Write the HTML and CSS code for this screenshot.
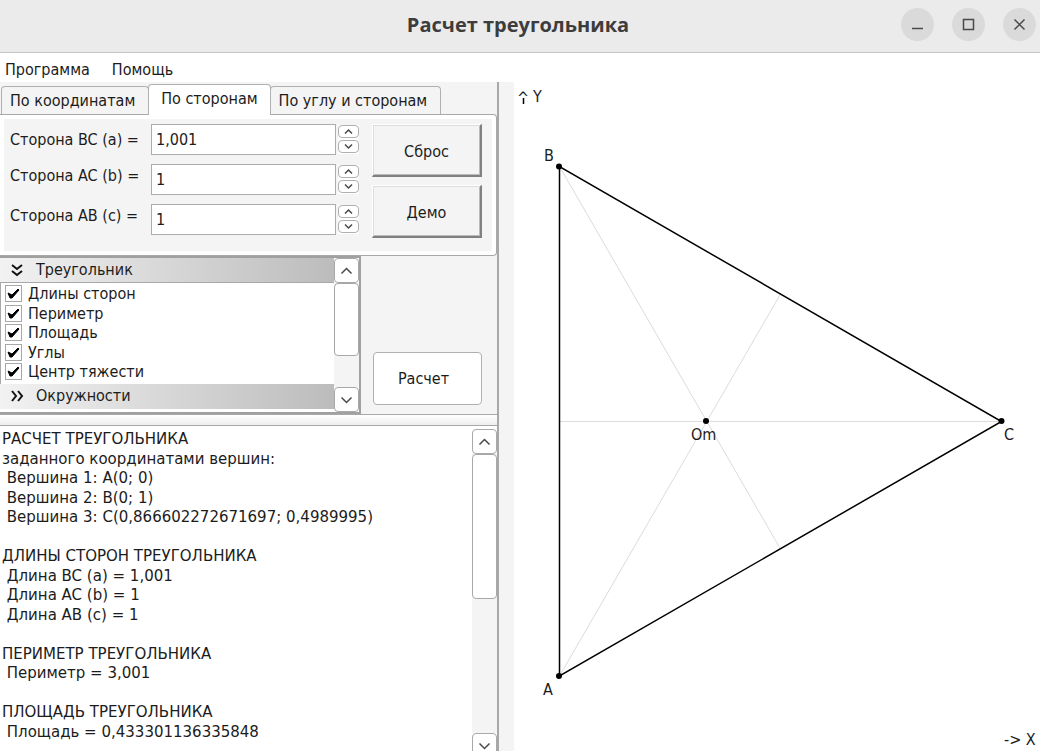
FILE: index.html
```html
<!DOCTYPE html>
<html lang="ru">
<head>
<meta charset="utf-8">
<title>Расчет треугольника</title>
<link rel="stylesheet" href="styles.css">
</head>
<body>
<div class="window">
  <header class="titlebar">
    <h1 class="title">Расчет треугольника</h1>
    <div class="controls">
      <button class="control" type="button" aria-label="Свернуть"><svg width="33" height="33" viewBox="0 0 33 33"><path d="M11 20.5h11"/></svg></button>
      <button class="control" type="button" aria-label="Развернуть"><svg width="33" height="33" viewBox="0 0 33 33"><path d="M11.5 11.5h10v10h-10z"/></svg></button>
      <button class="control" type="button" aria-label="Закрыть"><svg width="33" height="33" viewBox="0 0 33 33"><path d="M11.5 11.5l10 10M21.5 11.5l-10 10"/></svg></button>
    </div>
  </header>
  <nav class="menubar">
    <button class="menu" type="button">Программа</button>
    <button class="menu" type="button">Помощь</button>
  </nav>
  <main class="body">
    <div class="left">
      <div class="tabs" role="tablist">
        <button class="tab" type="button" role="tab" aria-selected="false">По координатам</button>
        <button class="tab active" type="button" role="tab" aria-selected="true">По сторонам</button>
        <button class="tab" type="button" role="tab" aria-selected="false">По углу и сторонам</button>
      </div>
      <div class="panel" role="tabpanel">
        <div class="panel-inner">
          <div class="sides">
            <div class="side">
              <label class="side-label" for="bc">Сторона BC (a) =</label>
              <input class="field" id="bc" type="text" value="1,001">
              <div class="spin">
                <button class="step" type="button" aria-label="Увеличить BC"><svg width="11" height="7" viewBox="0 0 11 7"><path d="M2 5.500l3.500-3.500 3.500 3.500"/></svg></button>
                <button class="step" type="button" aria-label="Уменьшить BC"><svg width="11" height="7" viewBox="0 0 11 7"><path d="M2 1.500l3.500 3.500 3.500-3.500"/></svg></button>
              </div>
            </div>
            <div class="side">
              <label class="side-label" for="ac">Сторона AC (b) =</label>
              <input class="field" id="ac" type="text" value="1">
              <div class="spin">
                <button class="step" type="button" aria-label="Увеличить AC"><svg width="11" height="7" viewBox="0 0 11 7"><path d="M2 5.500l3.500-3.500 3.500 3.500"/></svg></button>
                <button class="step" type="button" aria-label="Уменьшить AC"><svg width="11" height="7" viewBox="0 0 11 7"><path d="M2 1.500l3.500 3.500 3.500-3.500"/></svg></button>
              </div>
            </div>
            <div class="side">
              <label class="side-label" for="ab">Сторона AB (c) =</label>
              <input class="field" id="ab" type="text" value="1">
              <div class="spin">
                <button class="step" type="button" aria-label="Увеличить AB"><svg width="11" height="7" viewBox="0 0 11 7"><path d="M2 5.500l3.500-3.500 3.500 3.500"/></svg></button>
                <button class="step" type="button" aria-label="Уменьшить AB"><svg width="11" height="7" viewBox="0 0 11 7"><path d="M2 1.500l3.500 3.500 3.500-3.500"/></svg></button>
              </div>
            </div>
          </div>
          <div class="actions">
            <button class="raised" type="button">Сброс</button>
            <button class="raised" type="button">Демо</button>
          </div>
        </div>
      </div>
      <div class="options">
        <div class="list">
          <div class="groups">
            <button class="group open" type="button"><svg width="14" height="14" viewBox="0 0 14 14"><path d="M2 2l5 4 5-4M2 8l5 4 5-4"/></svg>Треугольник</button>
            <div class="checks">
              <label class="check"><span class="box"><input type="checkbox" checked><svg width="17" height="17" viewBox="0 0 17 17"><path d="M3 8l4 2 6-6 1 1-7 8h-2z"/></svg></span>Длины сторон</label>
              <label class="check"><span class="box"><input type="checkbox" checked><svg width="17" height="17" viewBox="0 0 17 17"><path d="M3 8l4 2 6-6 1 1-7 8h-2z"/></svg></span>Периметр</label>
              <label class="check"><span class="box"><input type="checkbox" checked><svg width="17" height="17" viewBox="0 0 17 17"><path d="M3 8l4 2 6-6 1 1-7 8h-2z"/></svg></span>Площадь</label>
              <label class="check"><span class="box"><input type="checkbox" checked><svg width="17" height="17" viewBox="0 0 17 17"><path d="M3 8l4 2 6-6 1 1-7 8h-2z"/></svg></span>Углы</label>
              <label class="check"><span class="box"><input type="checkbox" checked><svg width="17" height="17" viewBox="0 0 17 17"><path d="M3 8l4 2 6-6 1 1-7 8h-2z"/></svg></span>Центр тяжести</label>
            </div>
            <button class="group" type="button"><svg width="14" height="14" viewBox="0 0 14 14"><path d="M2 2l4 5-4 5M8 2l4 5-4 5"/></svg>Окружности</button>
          </div>
          <div class="scroll">
            <button class="arrow" type="button" aria-label="Вверх"><svg width="13" height="8" viewBox="0 0 13 8"><path d="M1.500 6.500l5-5 5 5"/></svg></button>
            <div class="track"><div class="thumb half"></div></div>
            <button class="arrow" type="button" aria-label="Вниз"><svg width="13" height="8" viewBox="0 0 13 8"><path d="M1.500 1.500l5 5 5-5"/></svg></button>
          </div>
        </div>
        <div class="run">
          <button class="calc" type="button">Расчет</button>
        </div>
      </div>
      <div class="splitter"></div>
      <div class="output">
        <pre class="report">РАСЧЕТ ТРЕУГОЛЬНИКА
заданного координатами вершин:
 Вершина 1: A(0; 0)
 Вершина 2: B(0; 1)
 Вершина 3: C(0,866602272671697; 0,4989995)

ДЛИНЫ СТОРОН ТРЕУГОЛЬНИКА
 Длина BC (a) = 1,001
 Длина AC (b) = 1
 Длина AB (c) = 1

ПЕРИМЕТР ТРЕУГОЛЬНИКА
 Периметр = 3,001

ПЛОЩАДЬ ТРЕУГОЛЬНИКА
 Площадь = 0,433301136335848</pre>
        <div class="scroll clipped">
          <button class="arrow" type="button" aria-label="Вверх"><svg width="13" height="8" viewBox="0 0 13 8"><path d="M1.500 6.500l5-5 5 5"/></svg></button>
          <div class="track"><div class="thumb"></div></div>
          <button class="arrow" type="button" aria-label="Вниз"><svg width="13" height="8" viewBox="0 0 13 8"><path d="M1.500 1.500l5 5 5-5"/></svg></button>
        </div>
      </div>
    </div>
    <svg class="plot" viewBox="514 82 526 669" role="img" aria-label="Треугольник ABC">
      <g class="medians">
        <path d="M559.500 421.500H1001M559.500 166.500L780.500 549M559.500 676L780.500 294"/>
      </g>
      <path class="triangle" d="M559.500 166.500V676L1001.500 421.500Z"/>
      <circle cx="559" cy="166.500" r="3"/>
      <circle cx="559" cy="676" r="3"/>
      <circle cx="1001.500" cy="421" r="3"/>
      <circle cx="706" cy="421" r="3"/>
      <text x="517" y="103">^</text>
      <path class="axis" d="M523.500 98v6"/>
      <text x="533" y="102">Y</text>
      <text x="544" y="161">B</text>
      <text x="543" y="695">A</text>
      <text x="1004" y="440">C</text>
      <text x="691" y="440">Om</text>
      <text x="1004" y="745">-&gt; X</text>
    </svg>
  </main>
</div>
</body>
</html>
```
FILE: styles.css
```css
* { box-sizing: border-box; }

body {
  margin: 0;
  color: #1c1c1c;
  background: #fff;
  font-family: "DejaVu Sans Condensed", "DejaVu Sans", sans-serif;
  font-stretch: condensed;
  font-size: 16px;
  line-height: 1.22;
}

button, input {
  margin: 0;
  padding: 0;
  border: 0;
  border-radius: 0;
  background: none;
  color: inherit;
  font: inherit;
}

svg { fill: none; stroke: #4a4a4a; stroke-width: 1.5; }

.window {
  display: flex;
  flex-direction: column;
  height: 100vh;
  overflow: hidden;
}

/* Title bar */
.titlebar {
  display: grid;
  grid-template-columns: 1fr auto 1fr;
  align-items: center;
  height: 53px;
  padding: 0 4px 3px 0;
  border-bottom: 1px solid #c4c4c4;
  background: #ebebeb;
  flex: none;
}
.title {
  grid-column: 2;
  margin: 0;
  color: #3d3d3d;
  font: bold 20px/28px "Open Sans", sans-serif;
}
.controls { display: flex; gap: 18px; justify-content: flex-end; }
.control { width: 33px; height: 33px; border-radius: 50%; background: #dadada; }
.control svg { display: block; }

/* Menu */
.menubar { display: flex; gap: 22px; height: 29px; padding: 5px 5px 0; flex: none; }

/* Main area */
.body { display: flex; flex: 1; min-height: 0; }
.left {
  display: flex;
  flex-direction: column;
  flex: 0 0 499px;
  min-width: 0;
  min-height: 0;
  border-right: 2px solid #a8a8a8;
  background: #f4f4f4;
}
.plot {
  flex: 1;
  min-width: 0;
  height: 100%;
  border-left: 15px solid #f4f4f4;
}
.plot text { fill: #1c1c1c; stroke: none; }
.plot circle { fill: #000; stroke: none; }
.triangle, .axis { stroke: #000; stroke-width: 1.5; }
.medians { stroke: #dcdcdc; stroke-width: 1; }

/* Tabs */
.tabs { display: flex; align-items: flex-end; height: 32px; padding-left: 1px; flex: none; }
.tab {
  height: 28px;
  padding: 0 13px 0 8px;
  border: 1px solid #b0b0b0;
  border-width: 1px 1px 0;
  border-radius: 4px 4px 0 0;
}
.tab.active {
  height: 31px;
  margin: 0 -1px -1px;
  padding: 0 12px 2px;
  background: #fff;
  z-index: 1;
}
.panel {
  padding: 4px;
  border: 1px solid #a8a8a8;
  border-left: 0;
  border-radius: 0 4px 4px 0;
  background: #fff;
  flex: none;
}
.panel-inner {
  display: flex;
  gap: 13px;
  padding: 5px 10px 13px 6px;
  background: #f4f4f4;
}
.sides { display: flex; flex-direction: column; gap: 9px; flex: 1; min-width: 0; }
.side { display: flex; align-items: center; gap: 2px; }
.side-label { flex: 0 0 139px; }
.side + .side .side-label { padding-bottom: 8px; }
.field {
  flex: 1;
  min-width: 0;
  height: 31px;
  padding: 0 4px;
  border: 1px solid #acacac;
  background: #fff;
}
.spin { display: grid; gap: 2px; padding-bottom: 1px; background: #fff; }
.step {
  display: flex;
  align-items: center;
  justify-content: center;
  width: 21px;
  height: 13px;
  border: 1px solid #b0b0b0;
  border-radius: 4px;
  background: #fff;
}
.actions { display: grid; gap: 8px; align-content: start; flex: 0 0 110px; }
.raised {
  height: 53px;
  padding-top: 3px;
  border: 1px solid #fff;
  border-right: 2px solid #808080;
  border-bottom: 2px solid #808080;
  box-shadow: inset 1px 1px #ddd, inset -1px -1px #bbb;
  background: #f4f4f4;
}

/* Report sections */
.options { display: flex; flex: none; background: #f4f4f4; }
.list {
  display: flex;
  flex: 0 0 361px;
  height: 158px;
  border: 2px solid #a0a0a0;
  border-left: 0;
  background: #fff;
}
.groups { flex: 1; }
.group {
  display: flex;
  align-items: center;
  gap: 12px;
  width: 100%;
  height: 25px;
  padding-left: 10px;
  background: linear-gradient(90deg, #f2f2f2, #bcbcbc);
}
.group.open { border-bottom: 1px solid #a8a8a8; }
.group svg { stroke: #111; stroke-width: 2; }
.checks { padding: 1px 0 2px 4px; border-left: 1px solid #a8a8a8; }
.check { display: flex; align-items: center; gap: 6px; }
.box { display: grid; }
.box input, .box svg { grid-area: 1 / 1; }
.box input {
  appearance: none;
  width: 17px;
  height: 17px;
  border: 1px solid #a8a8a8;
  background: #fff;
}
.box svg { fill: #000; stroke: #000; stroke-width: 1; pointer-events: none; }
.box input:not(:checked) + svg { display: none; }

.scroll { display: flex; flex-direction: column; flex: 0 0 25px; }
.arrow, .thumb {
  border: 1px solid #a8a8a8;
  border-radius: 4px;
  background: #fff;
}
.arrow {
  display: flex;
  align-items: center;
  justify-content: center;
  height: 25px;
  flex: none;
}
.track { flex: 1; background: #f4f4f4; }
.thumb { height: 52%; }
.thumb.half { height: 70%; }

.run { display: flex; flex: 1; align-items: flex-end; padding: 0 15px 9px 12px; }
.calc {
  width: 100%;
  height: 53px;
  padding-right: 8px;
  border: 1px solid #b0b0b0;
  border-radius: 4px;
  background: #fff;
}

.splitter {
  height: 12px;
  border: 1px solid #a8a8a8;
  border-width: 1px 0;
  background: linear-gradient(#fff, #eee);
  flex: none;
}
.output {
  display: flex;
  flex: 1;
  min-height: 0;
  padding-top: 3px;
  overflow: hidden;
  background: #fff;
}
.report {
  flex: 1;
  margin: 0;
  padding: 1px 2px;
  font-family: "DejaVu Sans", sans-serif;
  font-stretch: normal;
  font-size: 15px;
  line-height: 1.3;
}
.clipped { margin-bottom: -7px; }
```
